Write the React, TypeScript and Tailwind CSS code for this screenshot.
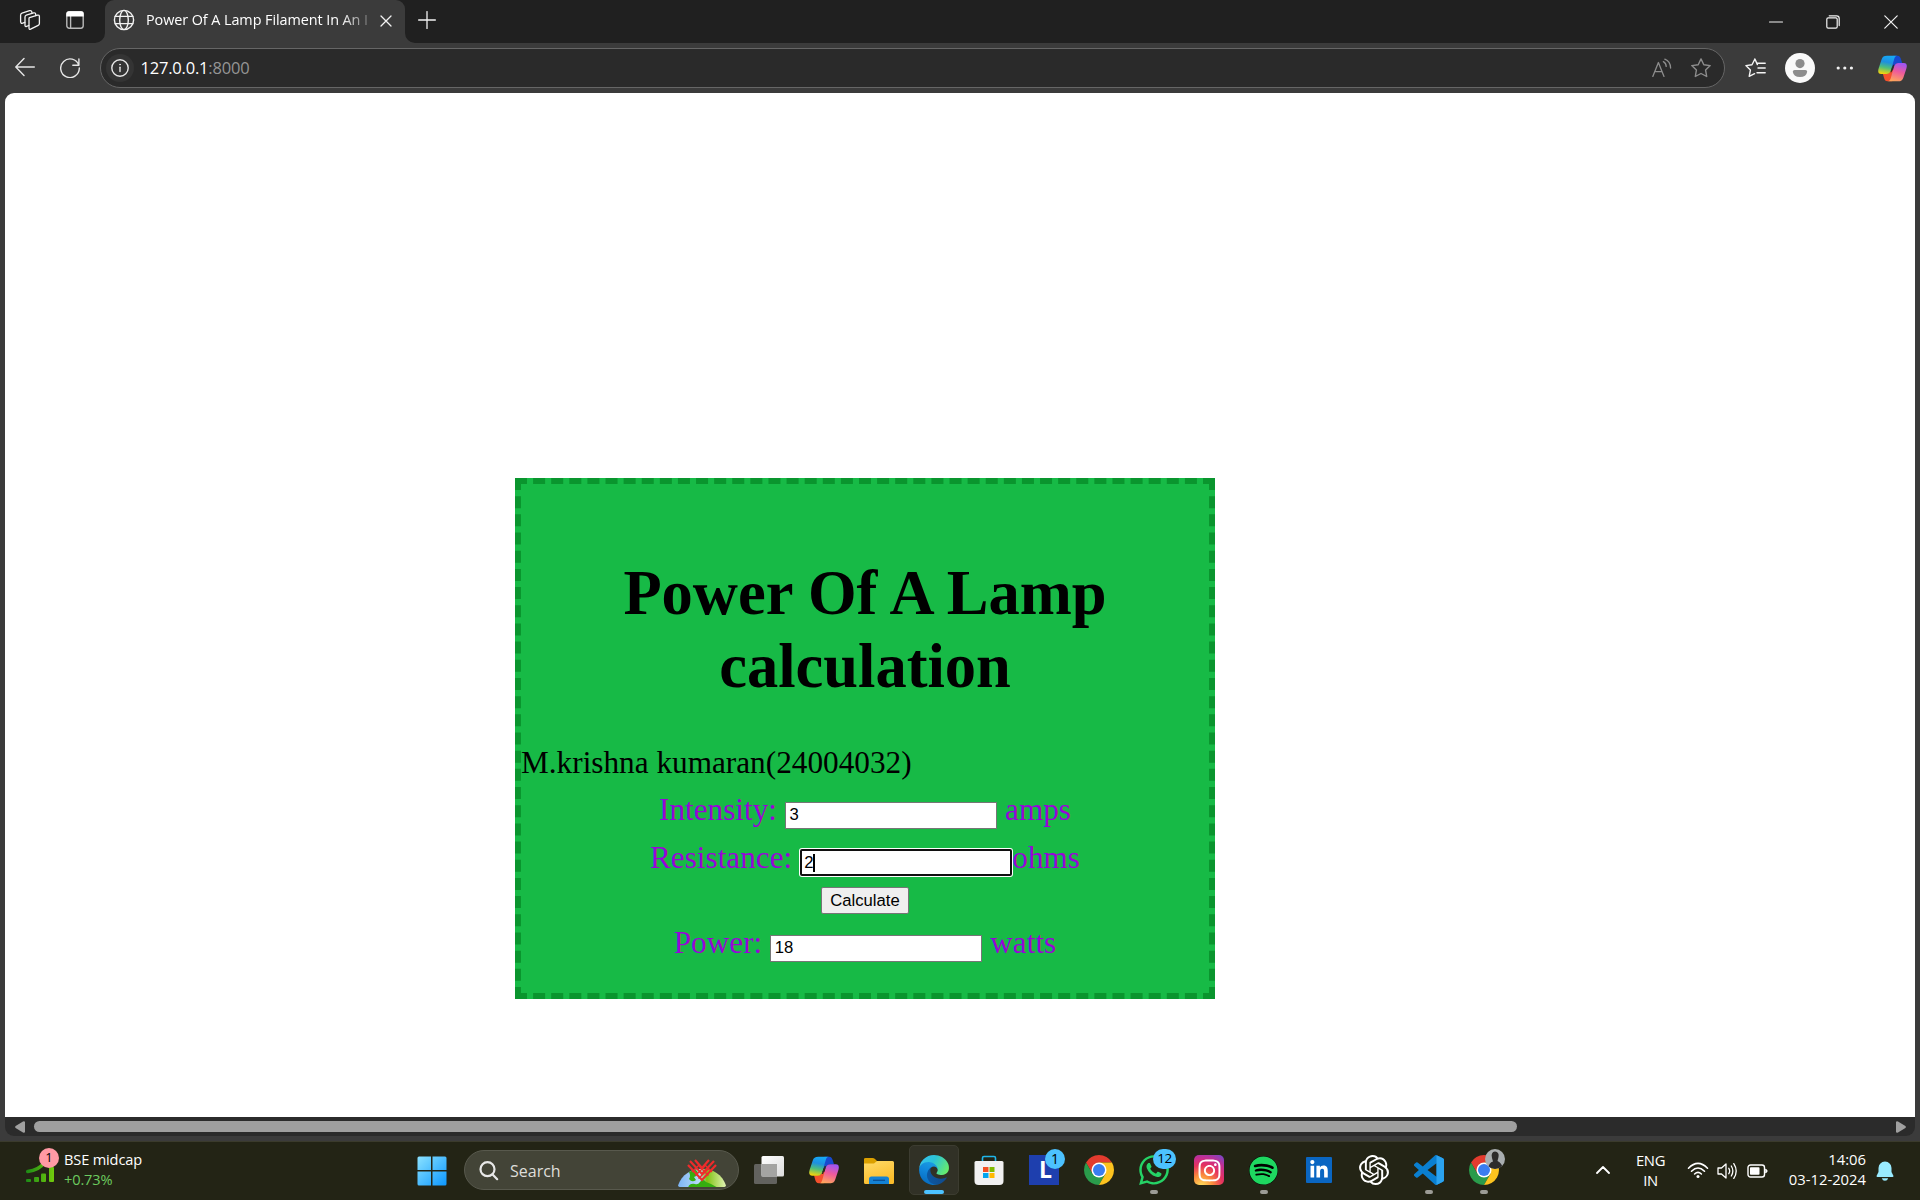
import React from 'react';
import { SiOpenai } from 'react-icons/si';
import { FaInstagram, FaSpotify, FaWhatsapp, FaLinkedinIn } from 'react-icons/fa';

const line = { fill: 'none', stroke: 'currentColor', strokeLinecap: 'round', strokeLinejoin: 'round' } as const;

function Copilot({ id, className }: { id: string; className: string }) {
  return (
    <svg viewBox="0 0 90 84" className={className}>
      <defs>
        <linearGradient id={id + 'l'} x1="0.5" y1="0" x2="0.3" y2="1">
          <stop offset="0" stopColor="#16a9f5" />
          <stop offset="0.35" stopColor="#1e8fe0" />
          <stop offset="0.65" stopColor="#4fbf7a" />
          <stop offset="1" stopColor="#f5d40c" />
        </linearGradient>
        <linearGradient id={id + 'r'} x1="0.6" y1="0" x2="0.3" y2="1">
          <stop offset="0" stopColor="#a155f2" />
          <stop offset="0.45" stopColor="#ee5a9c" />
          <stop offset="1" stopColor="#ffa85a" />
        </linearGradient>
      </defs>
      <path d="M46 2H60C68 2 70 8 72 15L75 25H64C57 25 54 29 52 34L38 38Z" fill="#1749cf" />
      <path d="M44 82H30C22 82 20 76 18 69L15 58H26C33 58 36 55 38 50L52 46Z" fill="#f4502c" />
      <path d="M28 2H60C54 2 52 6 50 13L41 45C38 55 34 59 26 59H10C0 59 -1 51 2 41L11 14C14 5 18 2 28 2Z" fill={`url(#${id}l)`} />
      <path d="M62 82H30C36 82 38 78 40 71L49 39C52 29 56 25 64 25H80C90 25 91 33 88 43L79 70C76 79 72 82 62 82Z" fill={`url(#${id}r)`} />
      <path d="M47 30H51Q49 34 48 39L42 54H38Q40 51 41 46Z" fill="#2e2c24" />
    </svg>
  );
}

function Chrome() {
  return (
    <svg viewBox="0 0 48 48" className="size-[30px]">
      <path d="M3.22 12A24 24 0 0 1 44.78 12H24L13.6 30Z" fill="#e33b2e" />
      <path d="M3.22 12L13.6 30L34.4 30L24 48A24 24 0 0 1 3.22 12Z" fill="#2a9b4b" />
      <path d="M24 48L34.4 30L24 12H44.78A24 24 0 0 1 24 48Z" fill="#fcc31f" />
      <circle cx="24" cy="24" r="12" fill="#fff" />
      <circle cx="24" cy="24" r="9.6" fill="#3a7df0" />
    </svg>
  );
}

function Edge() {
  return (
    <svg viewBox="4 4 257 256" className="size-[30px]">
      <defs>
        <linearGradient id="e1" x1="0" y1="0" x2="1" y2="0">
          <stop offset="0" stopColor="#0c59a4" />
          <stop offset="1" stopColor="#114a8b" />
        </linearGradient>
        <linearGradient id="e2" x1="0.6" y1="0" x2="0.3" y2="1">
          <stop offset="0" stopColor="#1b9de2" />
          <stop offset="0.4" stopColor="#1188dc" />
          <stop offset="1" stopColor="#0669bd" />
        </linearGradient>
        <linearGradient id="e3" x1="0" y1="0.2" x2="1" y2="0.6">
          <stop offset="0" stopColor="#35c1f1" />
          <stop offset="0.45" stopColor="#2cc3d6" />
          <stop offset="1" stopColor="#66eb6e" />
        </linearGradient>
      </defs>
      <path fill="url(#e1)" d="M235.68 195.48a93.73 93.73 0 0 1-10.54 4.71 101.87 101.87 0 0 1-35.9 6.46c-47.32 0-88.54-32.55-88.54-74.32A31.48 31.48 0 0 1 117.13 105c-42.8 1.8-53.8 46.4-53.8 72.53 0 73.88 68.09 81.37 82.76 81.37 7.91 0 19.84-2.3 27-4.56l1.31-.44A128.34 128.34 0 0 0 241 201.1a4 4 0 0 0-5.32-5.62z" />
      <path fill="url(#e2)" d="M110.34 246.34A79.2 79.2 0 0 1 87.6 225a80.72 80.72 0 0 1 29.53-120c3.12-1.47 8.45-4.13 15.54-4a32.35 32.35 0 0 1 25.69 13 31.88 31.88 0 0 1 6.36 18.66c0-.21 24.46-79.6-80-79.6-43.9 0-80 41.66-80 78.21a130.15 130.15 0 0 0 12.11 56 128 128 0 0 0 156.38 67.11 75.55 75.55 0 0 1-62.78-8z" />
      <path fill="url(#e3)" d="M156.94 153.78c-.81 1.05-3.3 2.5-3.3 5.66 0 2.61 1.7 5.12 4.72 7.23 14.38 10 41.49 8.68 41.56 8.68a59.56 59.56 0 0 0 30.27-8.35 61.38 61.38 0 0 0 30.43-52.88c.26-22.41-8-37.31-11.34-43.91C228.09 28.76 182.35 4 132.61 4a128 128 0 0 0-128 126.2c.48-36.54 36.8-66.05 80-66.05 3.5 0 23.46.34 42 10.07 16.34 8.58 24.9 18.94 30.85 29.21 6.18 10.67 7.28 24.15 7.28 29.52s-2.74 13.33-7.8 20.83z" />
    </svg>
  );
}

function TabStrip() {
  return (
    <div className="flex h-[43px] bg-[#202020] text-[#f2f2f2]">
      <div className="flex w-[105px] shrink-0 rounded-br-[9px]">
        <svg viewBox="0 0 22 22" className="ml-[19px] mt-[9px] size-[22px]" {...line} strokeWidth="1.3">
          <path d="M10.5 8.6 L18.5 6.2 Q20.4 5.8 20.4 7.6 V14.6 Q20.4 15.8 19.2 16.3 L11.6 20.2 Q10 20.8 10 19 V9.6 Q10 8.8 10.5 8.6Z" />
          <path d="M16.7 6.5 V5.2 Q16.5 3.4 14.6 3.9 L7.3 6.2 Q6 6.6 6 8 V16.6 Q6.2 18 7.6 17.4 L9.8 16.5" />
          <path d="M13 4 Q12.8 1 10.6 1.7 L3 4.2 Q1.6 4.7 1.6 6.2 V12.8 Q1.8 14.8 3.6 14.2 L5.8 13.4" />
        </svg>
        <svg viewBox="0 0 18 18" className="ml-[25px] mt-[11px] size-[18px]" fill="none" stroke="#f2f2f2" strokeWidth="1.4">
          <rect x="0.8" y="0.8" width="16.4" height="16.4" rx="2.4" stroke="#b9b9b9" />
          <path d="M4.6 5V17" stroke="#b9b9b9" />
          <path d="M0.3 5.4V3Q0.3 0.2 3 0.2H15Q17.7 0.2 17.7 3V5.4Z" fill="#fff" stroke="none" />
        </svg>
      </div>
      <div className="relative flex w-[300px] shrink-0 rounded-t-[9px] bg-[#3b3b3b]">
        <svg viewBox="0 0 10 10" className="absolute -left-[10px] bottom-0 size-[10px]"><path d="M10 0V10H0A10 10 0 0 0 10 0Z" fill="#3b3b3b" /></svg>
        <svg viewBox="0 0 10 10" className="absolute -right-[10px] bottom-0 size-[10px]"><path d="M0 0V10H10A10 10 0 0 1 0 0Z" fill="#3b3b3b" /></svg>
        <svg viewBox="0 0 22 22" className="ml-[8px] mt-[9px] size-[22px]" {...line} strokeWidth="1.4">
          <circle cx="11" cy="11" r="9.6" />
          <ellipse cx="11" cy="11" rx="4.3" ry="9.6" />
          <path d="M2.2 7.4H19.8M2.2 14.6H19.8" />
        </svg>
        <div className="ml-[11px] w-[223px] whitespace-nowrap text-[14.4px] leading-[39px] tracking-[-0.07px] text-white [mask-image:linear-gradient(90deg,#000_195px,transparent_232px)]">
          Power Of A Lamp Filament In An I
        </div>
        <svg viewBox="0 0 12 12" className="ml-[10.5px] mt-[14.5px] size-[12px] shrink-0" {...line} strokeWidth="1.3"><path d="M1 1L11 11M11 1L1 11" /></svg>
      </div>
      <svg viewBox="0 0 18 18" className="ml-[13px] mt-[10.5px] size-[18px]" {...line} strokeWidth="1.3"><path d="M9 0.6V17.4M0.6 9H17.4" /></svg>
      <div className="ml-auto flex">
        <svg viewBox="0 0 14 14" className="mr-[43px] mt-[14.5px] h-[14px] w-[14px]" {...line} strokeWidth="1.1"><path d="M0.5 7H13.5" /></svg>
        <svg viewBox="0 0 14 14" className="mr-[44px] mt-[14.5px] size-[14px]" {...line} strokeWidth="1.2"><rect x="0.8" y="2.8" width="10.4" height="10.4" rx="1.4" /><path d="M3.2 0.8H10.6Q13.2 0.8 13.2 3.4V10.6" /></svg>
        <svg viewBox="0 0 14 14" className="mr-[22px] mt-[14.5px] size-[14px]" {...line} strokeWidth="1.2"><path d="M0.8 0.8L13.2 13.2M13.2 0.8L0.8 13.2" /></svg>
      </div>
    </div>
  );
}

function Toolbar() {
  return (
    <div className="flex h-[50px] text-[#e6e6e6]">
      <svg viewBox="0 0 20 20" className="ml-[15px] mt-[14px] size-[20px] shrink-0" {...line} strokeWidth="1.4"><path d="M19.3 10H1M9 1.6L0.8 10L9 18.4" /></svg>
      <svg viewBox="0 0 20 20" className="ml-[25px] mt-[14.5px] size-[20px] shrink-0" {...line} strokeWidth="1.4"><path d="M18.8 7.2A9.3 9.3 0 1 0 19.3 10M18.9 1V7.3H12.8" /></svg>
      <div className="ml-[20px] mt-[5px] flex h-[40px] w-[1625px] shrink-0 rounded-full border border-[#666] bg-[#2a2a2a]">
        <div className="ml-[5px] mt-[5px] flex size-[28px] items-center justify-center rounded-full bg-[#343434]">
          <svg viewBox="0 0 18 18" className="size-[18px]" {...line} strokeWidth="1.4"><circle cx="9" cy="9" r="8.2" /><path d="M9 8.3V12.6" /><circle cx="9" cy="5.6" r="0.5" fill="currentColor" strokeWidth="0.8" /></svg>
        </div>
        <div className="ml-[6.5px] text-[16.5px] leading-[37px] tracking-[-0.2px] text-white">127.0.0.1<span className="text-[#959595]">:8000</span></div>
        <svg viewBox="0 0 20 20" className="ml-auto mr-[19px] mt-[9px] size-[20px] text-[#8d8d8d]" {...line} strokeWidth="1.3"><path d="M0.8 18.4L6.4 4.5L12 18.4M2.8 13.6H10M11.4 3.6Q14 5 14.2 8.4M12.8 1.2Q18.4 3.4 18.6 10" /></svg>
        <svg viewBox="0 0 20 20" className="mr-[13px] mt-[9px] size-[20px] text-[#8d8d8d]" {...line} strokeWidth="1.4"><path d="M10 0.9L12.8 6.7L19.2 7.6L14.6 12.1L15.7 18.5L10 15.5L4.3 18.5L5.4 12.1L0.8 7.6L7.2 6.7Z" /></svg>
      </div>
      <svg viewBox="0 0 21 20" className="ml-[19.5px] mt-[15px] h-[20px] w-[21px] shrink-0 text-[#f4f4f4]" {...line} strokeWidth="1.4"><path d="M12.4 6.6L9.9 1L7 6.7L0.9 7.6L5.4 12.1L4.2 18.4L9.6 15.7M9.9 1L12.4 6.6M12.4 5.2H20.2M13 10H20.2M12 14.8H20.2" /></svg>
      <svg viewBox="0 0 30 30" className="ml-[19.5px] mt-[10px] size-[30px] shrink-0"><circle cx="15" cy="15" r="15" fill="#fafafa" /><circle cx="15" cy="10.6" r="4.6" fill="#8d8d8d" /><path d="M9.6 17H20.4Q22.2 17 22.2 18.8Q21.4 24 15 24Q8.6 24 7.8 18.8Q7.8 17 9.6 17Z" fill="#8d8d8d" /></svg>
      <svg viewBox="0 0 18 4" className="ml-[21px] mt-[22.5px] h-[4px] w-[18px] shrink-0" fill="#f0f0f0"><circle cx="2.2" cy="2" r="1.6" /><circle cx="8.8" cy="2" r="1.6" /><circle cx="15.4" cy="2" r="1.6" /></svg>
      <Copilot id="ct" className="ml-[24px] mt-[11.5px] h-[27px] w-[29px] shrink-0" />
    </div>
  );
}

function Field({ label, unit, value, focused, joined }: { label: string; unit: string; value: string; focused?: boolean; joined?: boolean }) {
  return (
    <div className="flex h-[48px] items-baseline justify-center whitespace-nowrap leading-[48px] text-[#9705d8]">
      <span>{label}</span>
      <span
        className={
          'ml-[8px] flex h-[27px] w-[212px] items-baseline bg-white font-["Liberation_Sans",sans-serif] text-[16.67px] leading-[22px] text-black ' +
          (joined ? '' : 'mr-[8px] ') +
          (focused ? 'rounded-[2px] border-2 border-[#101010] pl-[2px] pt-[1px] ring-1 ring-white' : 'border border-[#767676] pl-[3.5px] pt-[1px]')
        }
      >
        {value}
        {focused && <span className="-ml-[1px] h-[18px] w-[2px] self-center bg-black" />}
      </span>
      <span>{unit}</span>
    </div>
  );
}

function Calculator() {
  return (
    <div className='ml-[510px] h-[521px] w-[700px] border-[6px] border-dashed border-[#0a952e] bg-[#17ba46] pt-[73px] font-["Liberation_Serif",serif] text-[31.25px] text-black'>
      <h1 className="h-[188px] text-center text-[62.5px] font-bold leading-[73px]">Power Of A Lamp<br />calculation</h1>
      <p className="h-[41px] leading-[36px]">M.krishna kumaran(24004032)</p>
      <Field label="Intensity:" unit="amps" value="3" />
      <Field label="Resistance:" unit="ohms" value="2" focused joined />
      <div className="flex h-[37px] justify-center pt-[5px]">
        <button className='h-[27px] w-[88px] rounded-[2px] border border-[#767676] bg-[#efefef] font-["Liberation_Sans",sans-serif] text-[16.67px] leading-[25px]'>Calculate</button>
      </div>
      <Field label="Power:" unit="watts" value="18" />
    </div>
  );
}

function TaskItem({ children, active, dot }: { children: React.ReactNode; active?: boolean; dot?: boolean }) {
  return (
    <div className="flex w-[55px] shrink-0 justify-center">
      <div className={'relative mt-[3px] flex h-[50px] w-[50px] items-center justify-center rounded-[5px] ' + (active ? 'border border-[#3c3c30] bg-[#313126]' : '')}>
        {children}
        {active && <span className="absolute bottom-0 left-[14px] h-[4px] w-[20px] rounded-full bg-[#4cc2ff]" />}
        {dot && <span className="absolute bottom-[1px] left-[21px] h-[4px] w-[8px] rounded-full bg-[#9c9c96]" />}
      </div>
    </div>
  );
}

function Taskbar() {
  return (
    <div className="flex h-[59px] border-t border-[#3b3b2c] bg-[#232415] text-white">
      <div className="flex w-[417px] shrink-0 pl-[26px]">
        <div className="relative h-[50px] w-[28px]">
          <svg viewBox="0 0 28 20" className="absolute left-0 top-[20px] h-[20px] w-[28px]">
            <defs><linearGradient id="st" x1="0" x2="28" y1="0" y2="0" gradientUnits="userSpaceOnUse"><stop offset="0" stopColor="#1c8a16" /><stop offset="1" stopColor="#72cc0c" /></linearGradient></defs>
            <g fill="url(#st)"><rect x="0" y="17" width="5" height="3" rx="1" /><rect x="8" y="15" width="5" height="5" rx="1" /><rect x="15" y="11.5" width="5" height="8.5" rx="1" /><rect x="23" y="5" width="5" height="15" rx="1" /></g>
            <path d="M1.8 9.5Q13 8 18 1" stroke="url(#st)" strokeWidth="3.6" fill="none" strokeLinecap="round" />
          </svg>
          <span className="absolute left-[13px] top-[6px] size-[20px] rounded-full bg-[#ff99a4] text-center text-[13px] leading-[19px] text-black">1</span>
        </div>
        <div className="ml-[10px] pt-[7px] text-[14.6px] leading-[20px] tracking-[-0.15px]">
          <div>BSE midcap</div>
          <div className="text-[#6ccb5f]">+0.73%</div>
        </div>
      </div>
      <svg viewBox="0 0 30 30" className="mt-[14px] size-[30px] shrink-0">
        <defs><linearGradient id="wn" x1="0" y1="0" x2="1" y2="1"><stop offset="0" stopColor="#8be2ff" /><stop offset="1" stopColor="#0c97ff" /></linearGradient></defs>
        <path d="M2 0.5H14V14H0.5V2Q0.5 0.5 2 0.5ZM15.5 0.5H28Q29.5 0.5 29.5 2V14H15.5ZM0.5 15.5H14V29.5H2Q0.5 29.5 0.5 28ZM15.5 15.5H29.5V28Q29.5 29.5 28 29.5H15.5Z" fill="url(#wn)" />
      </svg>
      <div className="ml-[17px] mt-[8px] flex h-[40px] w-[275px] shrink-0 rounded-full border border-[#58594d] bg-[#434437]">
        <svg viewBox="0 0 20 20" className="ml-[13.5px] mt-[9.5px] size-[20px]" fill="none" stroke="#e8e8e8" strokeWidth="2.2" strokeLinecap="round"><circle cx="8.5" cy="8.2" r="7" /><path d="M13.6 13.5L18.2 18.2" /></svg>
        <span className="ml-[11.5px] text-[16px] leading-[40px] text-[#dededa]">Search</span>
        <svg viewBox="0 0 48 30" className="ml-auto mr-[12px] mt-[7px] h-[30px] w-[48px]">
          <defs>
            <linearGradient id="ea" x1="0" x2="1" y1="0" y2="0"><stop offset="0" stopColor="#7db4f5" /><stop offset="0.45" stopColor="#b9dcfa" /><stop offset="0.6" stopColor="#7fc312" /><stop offset="1" stopColor="#e2f2b4" /></linearGradient>
            <clipPath id="gl"><path d="M0 27.5C7 5 41 5 48 27.5Q47.5 29 46 29H2Q0.5 29 0 27.5Z" /></clipPath>
          </defs>
          <g clipPath="url(#gl)">
            <rect width="48" height="30" fill="url(#ea)" />
            <path d="M10 30Q11 25 17 26Q20 27 22 24Q25 20 28 24Q34 26 40 30ZM11 14Q18 9 20 15Q19 18 16 19L18 22Q14 25 11 21Q13 18 11 14Z" fill="#35ae10" />
          </g>
          <path d="M10 7L24 22L38 7" stroke="#ef2b2b" strokeWidth="2.2" fill="none" />
          <path d="M12 3L24 16L36 3M17 2L24 10L31 2" stroke="#ef2b2b" strokeWidth="2.2" fill="none" />
          <path d="M14 14L21 7M17.500 17.500L27 8M20.500 20.500L31 10.500M34 14L27 7M30.500 17.500L21 8" stroke="#ef2b2b" strokeWidth="1.300" fill="none" />
        </svg>
      </div>
      <div className="ml-[2.5px] flex shrink-0">
        <TaskItem>
          <svg viewBox="0 0 30 28" className="h-[28px] w-[30px]"><defs><linearGradient id="tv" x1="0" y1="0" x2="1" y2="1"><stop offset="0" stopColor="#fff" /><stop offset="1" stopColor="#dcdcdc" /></linearGradient></defs><rect x="0" y="8" width="23" height="20" rx="1.5" fill="#62625e" /><rect x="7.5" y="0" width="22.5" height="20.5" rx="1.5" fill="url(#tv)" /><path d="M7.5 8H23V20.5H7.5Z" fill="#a4a4a2" /></svg>
        </TaskItem>
        <TaskItem><Copilot id="cb" className="h-[28px] w-[30px]" /></TaskItem>
        <TaskItem>
          <svg viewBox="0 0 30 27" className="mt-[1px] h-[27px] w-[30px]"><defs><linearGradient id="fo" x1="0" y1="0" x2="0.4" y2="1"><stop offset="0" stopColor="#ffdb68" /><stop offset="1" stopColor="#fbbd2b" /></linearGradient></defs><path d="M0 10V2Q0 1 1.5 1H8.5Q10 1 11 2L13 4H20V10Z" fill="#dba000" /><path d="M0 6.5H10L13 4H28.5Q30 4 30 5.5V25.5Q30 27 28.5 27H1.5Q0 27 0 25.5Z" fill="url(#fo)" /><path d="M5 27V22Q5 19.5 7.5 19.5H22.5Q25 19.5 25 22V27Z" fill="#1482d4" /><path d="M9 23.3H21" stroke="#0a4f94" strokeWidth="1.3" /></svg>
        </TaskItem>
        <TaskItem active><Edge /></TaskItem>
        <TaskItem>
          <svg viewBox="0 0 30 30" className="size-[30px]"><path d="M8.5 8V3Q8.5 1.5 10 1.5H20Q21.5 1.5 21.5 3V8" fill="none" stroke="#1fb6ea" strokeWidth="1.6" /><path d="M0.5 7.5Q0.5 6 2 6H28Q29.5 6 29.5 7.5V26Q29.5 30 25.5 30H4.5Q0.5 30 0.5 26Z" fill="#f1f1f1" /><path d="M9 12H14.5V17H9Z" fill="#f25022" /><path d="M15.5 12H20.5V17H15.5Z" fill="#7fba00" /><path d="M9 18H14.5V23H9Z" fill="#00a4ef" /><path d="M15.5 18H20.5V23H15.5Z" fill="#ffb900" /></svg>
        </TaskItem>
        <TaskItem>
          <div className="size-[30px] bg-[#1e3fae] pl-[10px] text-[23px] font-bold leading-[28px]">L</div>
          <span className="absolute right-[4px] top-[4px] size-[20px] rounded-full bg-[#4cc2ff] text-center text-[14px] leading-[19px] text-black">1</span>
        </TaskItem>
        <TaskItem><Chrome /></TaskItem>
        <TaskItem dot>
          <FaWhatsapp className="size-[34px] text-[#25d366]" />
          <span className="absolute right-[3px] top-[4px] h-[20px] w-[23px] rounded-full bg-[#4cc2ff] text-center text-[13.5px] leading-[19px] tracking-[-0.4px] text-black">12</span>
        </TaskItem>
        <TaskItem>
          <div className="flex size-[30px] items-center justify-center rounded-[5px] bg-[radial-gradient(circle_at_25%_105%,#ffd75a_5%,#fb8a3c_30%,#e6325f_55%,#c42e92_75%,#6a4bd0_100%)]"><FaInstagram className="size-[25px]" /></div>
        </TaskItem>
        <TaskItem dot><div className="mr-[1px] flex size-[29px] items-center justify-center rounded-full bg-black"><FaSpotify className="size-[29px] text-[#1ed760]" /></div></TaskItem>
        <TaskItem><div className="flex size-[26px] items-center justify-center rounded-[1px] bg-[#0a66c2]"><FaLinkedinIn className="size-[20px]" /></div></TaskItem>
        <TaskItem><SiOpenai className="size-[30px]" /></TaskItem>
        <TaskItem dot>
          <svg viewBox="0 0 24 24" className="size-[30px]"><path d="M23.15 2.587L18.21.21a1.494 1.494 0 0 0-1.705.29l-9.46 8.63-4.12-3.128a.999.999 0 0 0-1.276.057L.327 7.261A1 1 0 0 0 .326 8.74L3.899 12 .326 15.26a1 1 0 0 0 .001 1.479L1.65 17.94a.999.999 0 0 0 1.276.057l4.12-3.128 9.46 8.63a1.492 1.492 0 0 0 1.704.29l4.942-2.377A1.5 1.5 0 0 0 24 20.06V3.939a1.5 1.5 0 0 0-.85-1.352zm-5.146 14.861L10.826 12l7.178-5.448v10.896z" fill="#0a7fd0" /><path d="M18 .1L23.15 2.587A1.5 1.5 0 0 1 24 3.939V20.06A1.5 1.5 0 0 1 23.15 21.41L18 23.9Z" fill="#2ba3ef" /></svg>
        </TaskItem>
        <TaskItem dot>
          <Chrome />
          <svg viewBox="0 0 20 20" className="absolute right-[4px] top-[4px] size-[20px]"><defs><clipPath id="av"><circle cx="10" cy="10" r="10" /></clipPath></defs><g clipPath="url(#av)"><rect width="20" height="20" fill="#a9aeb0" /><path d="M3 20Q4 13 8 12.5L7 9Q5.5 3 10 2.5Q14.5 3 13.5 8L12.5 12Q17 14 18 20Z" fill="#2c2c2c" /></g></svg>
        </TaskItem>
      </div>
      <div className="ml-auto flex shrink-0 text-[14.8px] leading-[20px]">
        <svg viewBox="0 0 14 8" className="mt-[24px] h-[8px] w-[14px]" {...line} strokeWidth="1.8"><path d="M1 7L7 1L13 7" /></svg>
        <div className="ml-[24px] w-[34px] pt-[8px] text-center tracking-[-0.3px]">ENG<br />IN</div>
        <svg viewBox="0 0 22 17" className="ml-[19px] mt-[19.5px] h-[17px] w-[22px]" {...line} strokeWidth="1.6"><path d="M1.5 6.2Q11 -3.4 20.5 6.2M4.5 9.2Q11 2.8 17.5 9.2M7.6 12Q11 8.8 14.4 12" /><circle cx="11" cy="14.4" r="1.5" fill="currentColor" stroke="none" /></svg>
        <svg viewBox="0 0 21 18" className="ml-[8.5px] mt-[19.5px] h-[18px] w-[21px]" {...line} strokeWidth="1.3"><path d="M1 6H4.5L9 2V16L4.5 12H1ZM11.8 6.3Q13.6 9 11.8 11.7M14.3 4Q17.4 9 14.3 14M16.8 1.6Q21.6 9 16.8 16.4" /></svg>
        <svg viewBox="0 0 21 14" className="ml-[9px] mt-[21.5px] h-[14px] w-[21px]" {...line} strokeWidth="1.4"><rect x="1" y="1" width="16.5" height="12" rx="2.5" /><rect x="3" y="3.2" width="9.5" height="7.6" rx="0.8" fill="#fff" stroke="none" /><path d="M18.5 5.2Q20.2 5.4 20.2 7Q20.2 8.6 18.5 8.8Z" fill="#fff" strokeWidth="0.8" /></svg>
        <div className="w-[98px] pt-[7px] text-right">14:06<br />03-12-2024</div>
        <svg viewBox="0 0 18 20" className="ml-[10px] mr-[26px] mt-[19px] h-[20px] w-[18px]" fill="#99ebff"><path d="M9 0.5Q15 1 15.5 7V11L17.5 15Q17.5 16 16.5 16H1.5Q0.5 16 0.5 15L2.5 11V7Q3 1 9 0.5ZM5.8 17.2H12.2Q11.4 19.8 9 19.8Q6.6 19.8 5.8 17.2Z" /></svg>
      </div>
    </div>
  );
}

export default function App() {
  return (
    <div className='flex h-[1200px] w-[1920px] flex-col overflow-hidden bg-[#3b3b3b] font-["Open_Sans",sans-serif]'>
      <TabStrip />
      <Toolbar />
      <main className="mx-[5px] h-[1024px] shrink-0 rounded-t-[9px] bg-white pt-[385px]">
        <Calculator />
      </main>
      <div className="mx-[5px] mb-[5px] flex h-[19px] shrink-0 items-center rounded-b-[9px] bg-[#2b2b2b]">
        <svg viewBox="0 0 10 12" className="ml-[10px] h-[12px] w-[10px]" fill="#a0a0a0"><path d="M10 1V11Q9.5 12.3 8 11.5L0.6 7Q-0.4 6 0.6 5L8 0.5Q9.5 -0.3 10 1Z" /></svg>
        <div className="ml-[9px] h-[11px] w-[1483px] rounded-full bg-[#9f9f9f]" />
        <svg viewBox="0 0 10 12" className="ml-auto mr-[9px] h-[12px] w-[10px]" fill="#a0a0a0"><path d="M0 1V11Q0.5 12.3 2 11.5L9.4 7Q10.4 6 9.4 5L2 0.5Q0.5 -0.3 0 1Z" /></svg>
      </div>
      <Taskbar />
    </div>
  );
}
